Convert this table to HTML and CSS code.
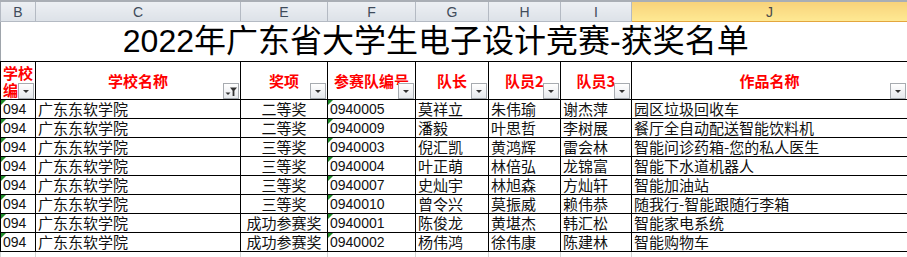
FILE: index.html
```html
<!DOCTYPE html>
<html lang="zh-CN">
<head>
<meta charset="utf-8">
<title>2022年广东省大学生电子设计竞赛-获奖名单</title>
<link rel="stylesheet" href="styles.css">
</head>
<body>
<table class="sheet">
  <colgroup>
    <col class="w-b"><col class="w-c"><col class="w-e"><col class="w-f"><col class="w-g"><col class="w-h"><col class="w-i"><col class="w-j">
  </colgroup>
  <tr class="colhdr">
    <th>B</th><th>C</th><th>E</th><th>F</th><th>G</th><th>H</th><th>I</th><th class="sel">J</th>
  </tr>
  <tr class="titlerow">
    <td class="title" colspan="8">2022年广东省大学生电子设计竞赛-获奖名单</td>
  </tr>
  <tr class="hdr">
    <th class="left"><span class="l1">学校</span><span class="l2">编</span><span class="fb"></span></th>
    <th>学校名称<span class="fb active"><svg viewBox="0 0 14 14" width="14" height="14"><path d="M1.5 8.5h5l-2.5 2.5z" fill="#333"/><path d="M6 3.5h7l-2.6 3.2v5.3h-1.8v-5.3z" fill="#333"/></svg></span></th>
    <th>奖项<span class="fb"></span></th>
    <th>参赛队编号<span class="fb"></span></th>
    <th>队长<span class="fb"></span></th>
    <th>队员2<span class="fb"></span></th>
    <th>队员3<span class="fb"></span></th>
    <th>作品名称<span class="fb"></span></th>
  </tr>
  <tr class="row"><td class="num">094</td><td>广东东软学院</td><td class="c">二等奖</td><td class="num">0940005</td><td>莫祥立</td><td>朱伟瑜</td><td>谢杰萍</td><td>园区垃圾回收车</td></tr>
  <tr class="row"><td class="num">094</td><td>广东东软学院</td><td class="c">二等奖</td><td class="num">0940009</td><td>潘毅</td><td>叶思哲</td><td>李树展</td><td>餐厅全自动配送智能饮料机</td></tr>
  <tr class="row"><td class="num">094</td><td>广东东软学院</td><td class="c">三等奖</td><td class="num">0940003</td><td>倪汇凯</td><td>黄鸿辉</td><td>雷会林</td><td>智能问诊药箱-您的私人医生</td></tr>
  <tr class="row"><td class="num">094</td><td>广东东软学院</td><td class="c">三等奖</td><td class="num">0940004</td><td>叶正萌</td><td>林倍弘</td><td>龙锦富</td><td>智能下水道机器人</td></tr>
  <tr class="row"><td class="num">094</td><td>广东东软学院</td><td class="c">三等奖</td><td class="num">0940007</td><td>史灿宇</td><td>林旭森</td><td>方灿轩</td><td>智能加油站</td></tr>
  <tr class="row"><td class="num">094</td><td>广东东软学院</td><td class="c">三等奖</td><td class="num">0940010</td><td>曾令兴</td><td>莫振威</td><td>赖伟恭</td><td>随我行-智能跟随行李箱</td></tr>
  <tr class="row"><td class="num">094</td><td>广东东软学院</td><td class="c">成功参赛奖</td><td class="num">0940001</td><td>陈俊龙</td><td>黄堪杰</td><td>韩汇松</td><td>智能家电系统</td></tr>
  <tr class="row"><td class="num">094</td><td>广东东软学院</td><td class="c">成功参赛奖</td><td class="num">0940002</td><td>杨伟鸿</td><td>徐伟康</td><td>陈建林</td><td>智能购物车</td></tr>
  <tr class="blank"><td></td><td></td><td></td><td></td><td></td><td></td><td></td><td></td></tr>
</table>
</body>
</html>
```
FILE: styles.css
```css
html, body {
  margin: 0;
  padding: 0;
  background: #ffffff;
  overflow: hidden;
}

.sheet {
  border-collapse: collapse;
  table-layout: fixed;
  width: 907px;
  font-family: "Noto Sans CJK SC", "Liberation Sans", sans-serif;
}

.w-b { width: 35px; }
.w-c { width: 205px; }
.w-e { width: 87px; }
.w-f { width: 88px; }
.w-g { width: 73px; }
.w-h { width: 72px; }
.w-i { width: 71px; }
.w-j { width: 276px; }

/* column letters */
.colhdr th {
  height: 19px;
  padding: 0;
  background: linear-gradient(#eceff3, #dde2e8);
  border: 1px solid #b4bac3;
  border-top: 2px solid #a9aeb5;
  font: normal 14px "Liberation Sans", sans-serif;
  color: #3f4b5a;
  text-align: center;
  vertical-align: middle;
}

.colhdr th.sel {
  background: linear-gradient(#f8d27a, #fee993);
  border-color: #e3a63e;
  border-top-color: #a9aeb5;
  color: #4a4a4a;
}

/* title */
.title {
  height: 39px;
  padding: 0 37px 0 0;
  border-left: 1px solid #9ea4ab;
  border-bottom: 1px solid #000;
  font: 32px "Liberation Sans", "Noto Sans CJK SC", sans-serif;
  line-height: 39px;
  color: #000;
  text-align: center;
  white-space: nowrap;
}

/* header row */
.hdr th {
  position: relative;
  height: 37px;
  padding: 0;
  border: 1px solid #000;
  color: #ff0000;
  font: bold 15px "Noto Sans CJK SC", "Liberation Sans", sans-serif;
  text-align: center;
  vertical-align: middle;
  white-space: nowrap;
  overflow: hidden;
}

.hdr th.left {
  text-align: left;
  padding: 0 0 0 2px;
}

.hdr th.left .l1,
.hdr th.left .l2 {
  display: block;
  height: 17px;
  line-height: 17px;
}

.fb {
  position: absolute;
  right: 1px;
  bottom: 0;
  width: 14px;
  height: 14px;
  border: 1px solid #a7abb0;
  background: linear-gradient(#ffffff, #e6e9ed);
}

.fb::after {
  content: "";
  position: absolute;
  left: 4px;
  top: 6px;
  border-left: 3px solid transparent;
  border-right: 3px solid transparent;
  border-top: 3px solid #333;
}

.fb.active::after {
  display: none;
}

.fb svg {
  display: block;
}

/* data rows */
.row td {
  height: 18px;
  padding: 0 2px;
  border: 1px solid #000;
  font: 15px "Noto Sans CJK SC", "Liberation Sans", sans-serif;
  line-height: 18px;
  color: #111;
  white-space: nowrap;
  overflow: hidden;
  vertical-align: bottom;
}

.row td.c {
  text-align: center;
}

.row td.num {
  position: relative;
  font: 14px "Liberation Sans", sans-serif;
  line-height: 18px;
}

.row td.num::before {
  content: "";
  position: absolute;
  left: 0;
  top: 0;
  border-top: 5px solid #1f8a2a;
  border-right: 5px solid transparent;
}

/* blank trailing row */
.blank td {
  height: 5px;
  padding: 0;
  border: 1px solid #d4d4d4;
}
```
